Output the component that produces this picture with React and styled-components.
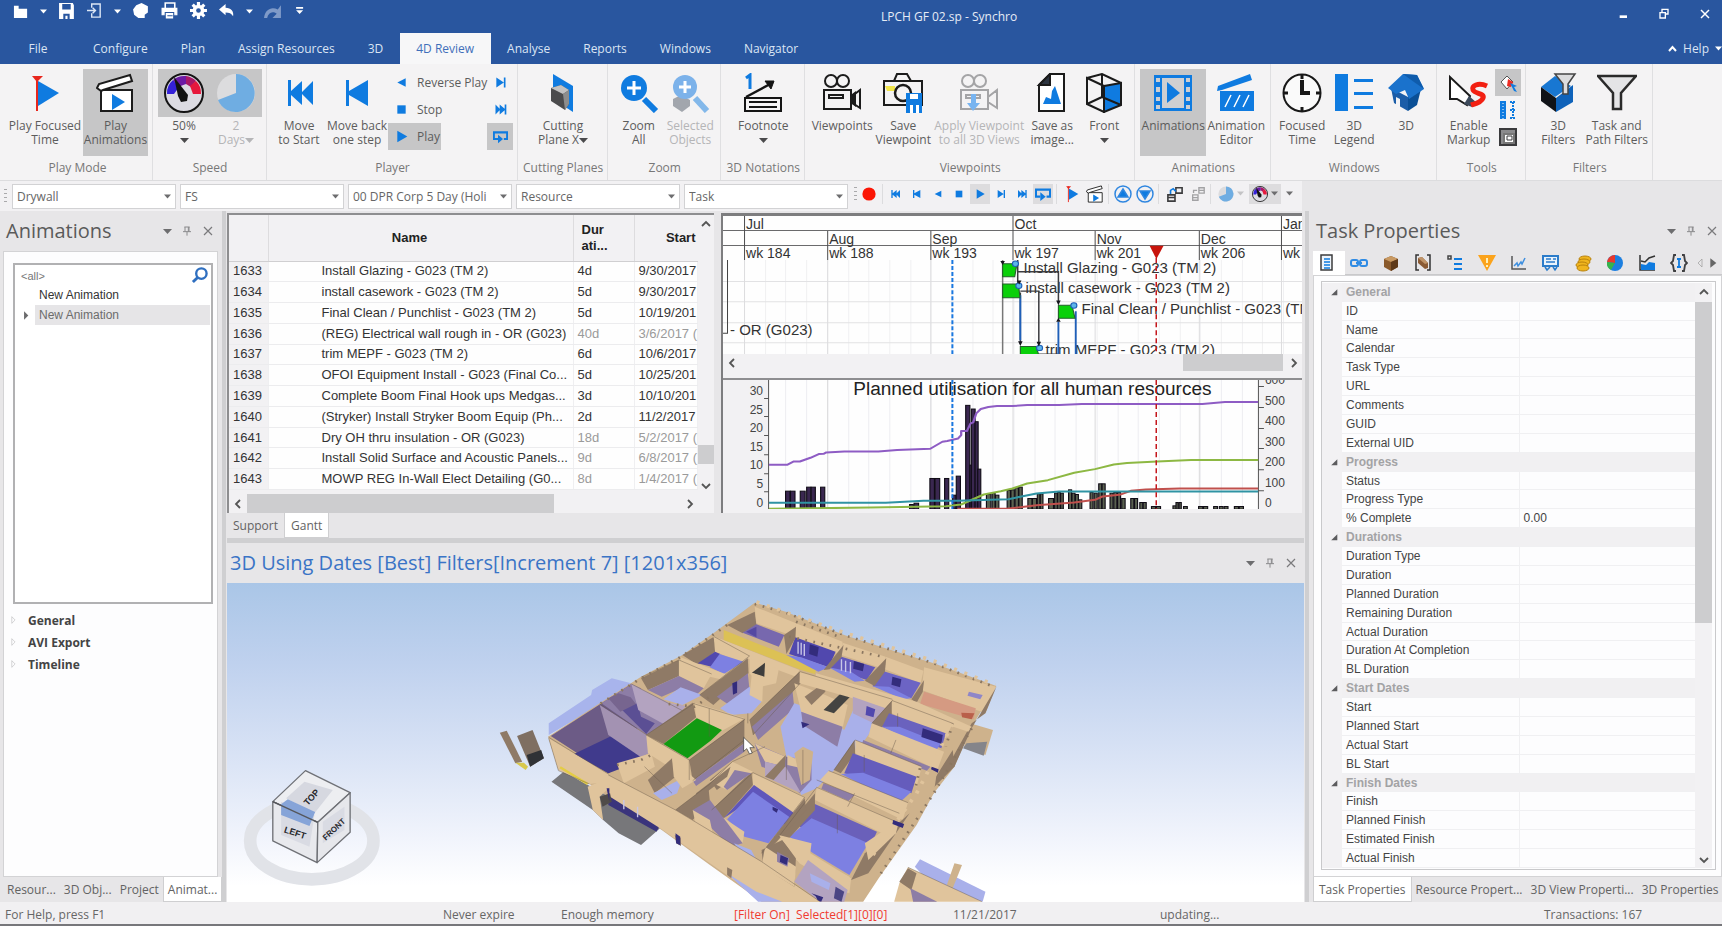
import React from 'react';
import styled, { createGlobalStyle, css } from 'styled-components';

const GlobalStyle = createGlobalStyle`
  * {
    box-sizing: border-box;
  }
  body {
    margin: 0;
    background: #e7e6e8;
    color: #4a4a4a;
    font-family: 'Open Sans', 'Noto Sans', sans-serif;
    font-size: 12px;
  }
  button,
  select,
  input {
    padding: 0;
    border: 0;
    background: transparent;
    color: inherit;
    font: inherit;
  }
  svg {
    display: block;
    flex: none;
  }
`;

const Window = styled.div`
  display: flex;
  flex-direction: column;
  min-height: 100vh;
`;

/* title bar */

const TitleBar = styled.header`
  display: grid;
  grid-template-columns: 5fr auto 4fr;
  align-items: center;
  height: 33px;
  background: #29569f;
  color: #e6ecf6;
`;

const QuickAccess = styled.div`
  display: flex;
  align-items: center;
  gap: 11px;
  height: 22px;
  align-self: start;
  padding-left: 13px;
`;

const WindowButtons = styled.div`
  display: flex;
  align-self: start;
  align-items: center;
  justify-content: flex-end;
  gap: 29px;
  height: 27px;
  padding-right: 11px;
`;

const PlainButton = styled.button`
  display: flex;
  align-items: center;
  justify-content: center;
`;

const TabBar = styled.nav`
  display: flex;
  align-items: stretch;
  height: 31px;
  background: #29569f;
  color: #dbe5f4;
`;

const RibbonTab = styled.button`
  padding: 0 17px 0 16px;
  white-space: nowrap;
  color: ${(props) => (props.$active ? '#3f6fba' : '#dbe5f4')};
  background: ${(props) => (props.$active ? '#f7f7f8' : 'transparent')};
`;

const FileTab = styled(RibbonTab)`
  width: 77px;
`;

const HelpButton = styled(RibbonTab)`
  display: flex;
  align-items: center;
  gap: 6px;
  margin-left: auto;
  padding: 0;
`;

/* ribbon */

const Ribbon = styled.section`
  display: flex;
  height: 117px;
  padding-left: 2px;
  background: #f4f3f4;
  border-bottom: 1px solid #dcdcde;
`;

const RibbonGroup = styled.div`
  display: flex;
  flex-direction: column;
  padding: 5px 4px 0 5px;
  border-right: 1px solid #dfdfe1;
`;

const GroupBody = styled.div`
  display: flex;
  height: 87px;
`;

const GroupLabel = styled.div`
  line-height: 24px;
  text-align: center;
  white-space: nowrap;
  color: #777;
`;

const LargeButton = styled.button`
  display: flex;
  flex-direction: column;
  align-items: center;
  width: ${(props) => props.$width}px;
  color: ${(props) => (props.$disabled ? '#b5b5b7' : '#5c5c5c')};
  background: ${(props) => (props.$active ? '#c6c6c7' : 'transparent')};
`;

const IconPane = styled.span`
  display: flex;
  align-items: center;
  justify-content: center;
  width: 100%;
  height: 48px;
  margin-bottom: 2px;
  background: ${(props) => (props.$shade ? '#c6c6c7' : 'transparent')};
`;

const ButtonLine = styled.span`
  display: flex;
  align-items: center;
  height: 14px;
  line-height: 14px;
  white-space: nowrap;
`;

const SmallColumn = styled.div`
  width: ${(props) => props.$width}px;
`;

const SmallButton = styled.button`
  display: flex;
  align-items: center;
  justify-content: ${(props) => (props.$iconOnly ? 'center' : 'flex-start')};
  gap: 8px;
  min-width: 26px;
  height: 27px;
  padding: 0 ${(props) => (props.$iconOnly ? 0 : 1)}px 0 ${(props) => (props.$iconOnly ? 0 : 6)}px;
  white-space: nowrap;
  color: #5c5c5c;
  background: ${(props) => (props.$active ? '#c6c6c7' : 'transparent')};
`;

/* filter toolbar */

const Toolbar = styled.div`
  display: flex;
  align-items: center;
  height: 30px;
`;

const ToolbarStrip = styled.div`
  display: flex;
  align-items: center;
  gap: 4px;
  height: 30px;
  padding: 0 4px;
  background: #f2f1f3;
`;

const PlayerStrip = styled(ToolbarStrip)`
  gap: 1px;
  padding: 0 6px 5px 2px;
`;

const Grip = styled.span`
  width: 3px;
  height: 14px;
  margin-right: 1px;
  background: repeating-linear-gradient(#a9a9ab 0 1px, transparent 1px 4px);
`;

const Combo = styled.label`
  position: relative;
  display: block;
  width: 164px;
  height: 25px;
  background: #fff;
  border: 1px solid #d2d2d4;
  svg {
    position: absolute;
    top: 9px;
    right: 4px;
    pointer-events: none;
  }
`;

const ComboSelect = styled.select`
  width: 144px;
  height: 23px;
  padding-left: 4px;
  appearance: none;
  outline: none;
  color: #666;
`;

const ToolButton = styled.button`
  display: flex;
  align-items: center;
  justify-content: center;
  gap: 3px;
  width: ${(props) => props.$width || 20}px;
  height: 20px;
  background: ${(props) => (props.$active ? '#dddcde' : 'transparent')};
`;

const ToolDivider = styled.span`
  width: 1px;
  height: 20px;
  margin: 0 2px;
  background: #dcdcde;
`;

/* docking layout */

const Main = styled.main`
  display: flex;
  flex: 1;
`;

const Splitter = styled.div`
  flex: none;
  width: 4px;
  margin: 0 1px;
  background: #cfcfd1;
`;

const SidePanel = styled.aside`
  display: flex;
  flex: none;
  flex-direction: column;
  width: ${(props) => props.$width}px;
  padding-left: 3px;
`;

const PanelHeader = styled.div`
  display: flex;
  align-items: center;
  height: 40px;
  padding: 0 ${(props) => props.$right}px 0 3px;
`;

const PanelTitle = styled.h2`
  flex: 1;
  margin: 0;
  font-size: 20px;
  font-weight: 400;
  line-height: 28px;
  white-space: nowrap;
  color: ${(props) => (props.$accent ? '#3a74c6' : '#5a5a5a')};
`;

const PanelControls = styled.div`
  display: flex;
  align-items: center;
  gap: 9px;
`;

const PanelBody = styled.div`
  flex: 1;
  margin-right: ${(props) => props.$gap || 0}px;
  background: #fdfdfe;
  border: 1px solid #d3d3d5;
  padding: ${(props) => props.$pad};
`;

const DockTabs = styled.div`
  display: flex;
  height: 25px;
`;

const DockTab = styled.button`
  flex: none;
  padding: 0 ${(props) => props.$pad || 4}px;
  white-space: nowrap;
  color: #636363;
  ${(props) =>
    props.$active &&
    css`
      background: #fff;
      border: 1px solid #cfcfd1;
      border-top: 0;
    `}
`;

/* animations panel */

const AnimationList = styled.div`
  height: 341px;
  padding: 1px;
  border: 2px solid #b1b1b3;
  background: #fff;
  font-family: 'Liberation Sans', sans-serif;
`;

const SearchRow = styled.label`
  display: flex;
  align-items: center;
  justify-content: space-between;
  height: 19px;
  padding: 0 2px 0 5px;
  font-size: 11px;
`;

const SearchInput = styled.input`
  width: 140px;
  outline: none;
  &::placeholder {
    color: #777;
    opacity: 1;
  }
`;

const AnimationRow = styled.div`
  display: flex;
  align-items: center;
  height: 20px;
  color: ${(props) => (props.$selected ? '#6c6c6c' : '#333')};
`;

const RowArrow = styled.span`
  width: 19px;
  padding-left: 5px;
`;

const RowName = styled.span`
  flex: 1;
  line-height: 20px;
  padding-left: 4px;
  background: ${(props) => (props.$selected ? '#e6e5e7' : 'transparent')};
`;

const Section = styled.button`
  display: flex;
  align-items: center;
  gap: 9px;
  height: 22px;
  font-weight: 700;
  color: #444;
`;

const Sections = styled.div`
  margin: 5px 0 0 -4px;
`;

/* centre area */

const Centre = styled.section`
  display: flex;
  flex: 1;
  flex-direction: column;
  min-width: 0;
`;

const ScheduleRow = styled.div`
  display: flex;
  gap: 7px;
  height: 300px;
  margin-top: 2px;
`;

const TaskPane = styled.div`
  display: grid;
  grid-template-columns: 1fr 16px;
  grid-template-rows: 1fr 19px;
  flex: 0 0 487px;
  background: #f2f1f3;
  border: solid #8e8e90;
  border-width: 2px 0 0 2px;
`;

const TableClip = styled.div`
  height: 279px;
  overflow: hidden;
`;

const TaskTable = styled.table`
  width: 100%;
  height: 275px;
  border-collapse: collapse;
  table-layout: fixed;
  font-family: 'Liberation Sans', sans-serif;
  font-size: 13px;
  color: #333;
  background: #fefefe;
  th {
    height: 46px;
    padding: 0 2px;
    line-height: 16px;
    color: #222;
    background: #f2f1f3;
    border-right: 1px solid #dddcde;
    border-bottom: 1px solid #d0cfd1;
  }
  td {
    padding: 0 0 0 4px;
    line-height: 16px;
    white-space: nowrap;
    border-bottom: 1px solid #ececee;
    border-right: 1px solid #efeff1;
  }
  td:first-child {
    background: #f2f1f3;
  }
  td:nth-child(2) {
    padding-left: 53px;
  }
`;

const FadedCell = styled.td`
  color: ${(props) => (props.$done ? '#9a9a9a' : '#333')};
`;

const NameHead = styled.th`
  && {
    padding-right: 24px;
  }
`;

const DurationHead = styled.th`
  text-align: left;
  && {
    padding-left: 8px;
  }
`;

const StartHead = styled.th`
  text-align: right;
  && {
    border-right: 0;
  }
`;

const ScrollTrack = styled.div`
  display: flex;
  flex-direction: ${(props) => (props.$vertical ? 'column' : 'row')};
  background: #f2f1f3;
`;

const ScrollSpace = styled.span`
  flex: ${(props) => props.$size} 0 0;
`;

const ScrollThumb = styled.span`
  flex: ${(props) => props.$size} 0 0;
  background: #cdcdcf;
`;

const ScrollButton = styled(PlainButton)`
  flex: 0 0 17px;
`;

const GanttPane = styled.div`
  display: flex;
  flex: 1;
  flex-direction: column;
  min-width: 0;
  margin-right: 2px;
  background: #f2f1f3;
  border: solid #7d7d7f;
  border-width: 3px 0 0 2px;
`;

const GanttScroll = styled.div`
  height: 17px;
  display: grid;
  margin-bottom: 7px;
`;

const ResourceFrame = styled.div`
  border-top: 2px solid #8e8e90;
`;

const HorizontalBar = styled.div`
  height: 5px;
  background: #cfcfd1;
`;

const Viewport = styled.div`
  flex: 1;
  height: 319px;
  overflow: hidden;
  background: linear-gradient(#aac6e7 0%, #bfd1ee 25%, #d5e0f4 50%, #f1f4fc 80%, #ffffff 95%);
`;

/* properties panel */

const PropertyTabs = styled.div`
  display: flex;
  align-items: center;
  height: 24px;
  border-bottom: 1px solid #c9c9cb;
`;

const PropertyTab = styled.button`
  display: flex;
  flex: none;
  align-items: center;
  justify-content: center;
  width: ${(props) => props.$width || 32}px;
  height: 24px;
  padding-right: 4px;
  background: ${(props) => (props.$active ? '#fff' : 'transparent')};
`;

const PropertyFrame = styled.div`
  display: grid;
  grid-template-columns: 1fr 17px;
  height: 589px;
  padding: 1px 3px 1px 0;
  border: 1px solid #c9c9cb;
`;

const PropertyTable = styled.table`
  width: 100%;
  height: 585px;
  border-collapse: collapse;
  table-layout: fixed;
  font-family: 'Liberation Sans', sans-serif;
  line-height: 14px;
  color: #444;
  td,
  th {
    padding: 0 0 0 4px;
    text-align: left;
    font-weight: 400;
    border-bottom: 1px solid #f0f0f2;
    white-space: nowrap;
  }
  td:last-child {
    border-left: 1px solid #f0f0f2;
  }
`;

const Gutter = styled.td`
  background: #f2f1f3;
  && {
    padding: 0 0 0 7px;
    border-bottom-color: #f2f1f3;
  }
`;

const SectionHead = styled.th`
  background: #f1f0f2;
  && {
    font-weight: 700;
    color: #a3a3a5;
  }
`;

/* status bar */

const StatusBar = styled.footer`
  display: grid;
  grid-template-columns: 438px 118px 173px 219px 207px 1fr 178px;
  align-items: center;
  height: 24px;
  padding: 4px 0 0 5px;
  background: #f1f0f2;
  border-bottom: 2px solid #77777b;
  white-space: nowrap;
`;

const StatusText = styled.span`
  line-height: 16px;
  color: ${(props) => (props.$alert ? '#f03b30' : '#666')};
`;

const BLUE = '#0f7be0';

/* ---- glyphs ---- */

const Caret = ({ color = '#6d6d6f', size = 9 }) => (
  <svg width={size} height="5" viewBox="0 0 9 5">
    <path d="M0 0h9L4.500 5z" fill={color} />
  </svg>
);

const Chevron = ({ turn = 0 }) => (
  <svg width="10" height="10" viewBox="0 0 10 10">
    <path d="M1 7l4-4 4 4" fill="none" stroke="#555" strokeWidth="1.800" transform={`rotate(${turn} 5 5)`} />
  </svg>
);

const shapes = {
  folder: <path d="M1 3h5v3h9v10H1z" fill="#fff" />,
  disk: <path fillRule="evenodd" fill="#fff" d="M1 1h13l1 2v13H1zM4 2v5h8V2zm1 9v5h2v-3h2v3h2v-5z" />,
  exportDoc: (
    <g fill="none" stroke="#dce6f5">
      <path d="M5 5V1h9v14H5v-4" strokeWidth="1.500" />
      <path d="M0 8h9M6 5l3 3-3 3" strokeWidth="1.500" />
    </g>
  ),
  blob: <path d="M4 3l5-2 6 3v6l-3 2v3H6l-4-3-1-5z" fill="#fff" />,
  printer: (
    <g fill="none" stroke="#fff">
      <path d="M4 6V1h9v5" strokeWidth="1.500" />
      <path d="M1 6h14v6H1z" fill="#fff" />
      <path d="M4 10h8v6H4zM6 13h5" stroke="#29569f" fill="#fff" />
    </g>
  ),
  gear: (
    <g>
      <path d="M8 0v16M0 8h16M2.500 2.500l11 11M13.500 2.500l-11 11" stroke="#fff" strokeWidth="3" />
      <circle cx="8" cy="8" r="5.500" fill="#fff" />
      <circle cx="8" cy="8" r="2.200" fill="#29569f" />
    </g>
  ),
  undo: <path d="M0 7l7-6v4c6 0 9 4 8 9-2-3-4-4-8-4v3z" fill="#fff" />,
  redo: <path d="M16 3v12H8l4-4C8 8 4 10 3 15H0C1 7 7 4 13 7z" fill="#7f9ac8" />,
  more: <path d="M4 4h9v2H4zM4 8h9l-4.500 5z" fill="#fff" />,
  flag: (
    <g>
      <path d="M13 8l21 12-21 13z" fill={BLUE} />
      <path d="M12 3v35" stroke="#e8261c" strokeWidth="2" />
      <path d="M7 3h11l-6 6z" fill="#e8261c" />
    </g>
  ),
  clapper: (
    <g fill="#fff" stroke="#1c1c1c" strokeWidth="2">
      <path d="M5 17h31v21H5z" />
      <path d="M5 18L1 15l2-4L34 2l2 6L7 17z" />
      <path d="M16 21l13 8-13 8z" fill={BLUE} stroke="none" />
    </g>
  ),
  gauge: (
    <g>
      <circle cx="20" cy="20" r="19" fill="#dcdbe2" stroke="#141414" strokeWidth="2" />
      <path d="M3 21A17 17 0 0 1 9 7l6 7-5 7z" fill="#3420d8" />
      <path d="M9 7a17 17 0 0 1 13-4v8l-8 3z" fill="#6c1aa4" />
      <path d="M22 3a17 17 0 0 1 10 5l-5 6-5-3z" fill="#a81868" />
      <path d="M32 8a17 17 0 0 1 5 13h-8l-3-8z" fill="#e6183c" />
      <path d="M10 4l14 18-1 6-6 1-3-6z" fill="#111" />
    </g>
  ),
  pie: (
    <g>
      <circle cx="20" cy="20" r="19" fill="#dcdcde" />
      <path d="M20 20V1a19 19 0 1 1-18 26z" fill="#6fade2" />
    </g>
  ),
  toStart: <path d="M9 7h3v11L23 8v11l11-11v24L23 21v11L12 22v11H9z" fill={BLUE} />,
  stepBack: <path d="M9 7h3v11l19-11v26L12 22v11H9z" fill={BLUE} />,
  cutPlane: (
    <g>
      <path d="M10 1l20 12v26L10 26z" fill={BLUE} />
      <path d="M8 15l10-3 8 5v14l-4 6-14-9z" fill="#4b4b4d" />
      <path d="M8 15l10-3 8 5-6 4z" fill="#c2c2c2" />
      <path d="M20 21l6-4v14l-4 6z" fill="#8d8d8d" />
    </g>
  ),
  zoomAll: (
    <g>
      <circle cx="15" cy="15" r="13" fill={BLUE} />
      <path d="M15 8v14M8 15h14" stroke="#fff" strokeWidth="3" />
      <path d="M25 26l12 12" stroke={BLUE} strokeWidth="6" />
    </g>
  ),
  zoomSelected: (
    <g>
      <path d="M3 26l8-4 9 5v6l-8 6-9-6z" fill="#a2a6ad" />
      <circle cx="15" cy="14" r="12" fill="#7cb2ea" />
      <path d="M15 8v12M9 14h12" stroke="#fff" strokeWidth="3" />
      <path d="M25 25l12 13" stroke="#83b8ea" strokeWidth="6" />
    </g>
  ),
  footnote: (
    <g fill="none" stroke="#141414" strokeWidth="2.500">
      <path d="M3 5l4-3v14" stroke={BLUE} strokeWidth="3" />
      <path d="M2 25h36v13H2zM6 29h28M6 34h28" strokeWidth="2" />
      <path d="M3 24L29 10" />
      <path d="M22 8l9 0-3 8z" fill="#141414" strokeWidth="1" />
    </g>
  ),
  camcorder: (
    <g fill="none" stroke="#1b1b1b" strokeWidth="2">
      <circle cx="9" cy="8" r="6" />
      <circle cx="21" cy="8" r="6" />
      <path d="M2 17h27v19H2zM7 22h14v3H7z" />
      <path d="M29 24l9-7v18l-9-6z" />
      <path d="M29 23l4-3v12l-4-3z" fill="#1b1b1b" />
    </g>
  ),
  saveView: (
    <g fill="none" stroke="#1b1b1b" strokeWidth="2">
      <path d="M1 8h38v24H1zM11 8l3-7h10l4 7" />
      <path d="M2 13h10v5H4z" fill="#f2e64c" stroke="none" />
      <circle cx="20" cy="20" r="8" strokeWidth="2.500" />
      <path d="M23 20h16v20H23z" fill={BLUE} stroke="none" />
      <path d="M27 21h8v5h-8zM27 32h3v8h-3zM33 32h3v8h-3z" fill="#fff" stroke="none" />
    </g>
  ),
  applyView: (
    <g fill="none" stroke="#a4a4a6" strokeWidth="2">
      <circle cx="9" cy="8" r="6" />
      <circle cx="21" cy="8" r="6" />
      <path d="M2 17h27v19H2zM7 22h14v3H7zM29 24l9-7v18l-9-6z" />
      <path d="M12 21h5v9h4l-7 8-6-8h4z" fill="#78b4f0" stroke="none" />
    </g>
  ),
  saveImage: (
    <g fill="none" stroke="#1b1b1b" strokeWidth="2">
      <path d="M18 1h14v37H7V12z" fill="#fff" />
      <path d="M18 1v11H7z" fill="#2c3440" />
      <path d="M11 31l3-7 5 2 1-8 3-5 3 9 3 9z" fill={BLUE} stroke="none" />
    </g>
  ),
  cube: (
    <g fill="none" stroke="#1b1b1b" strokeWidth="2">
      <path d="M20 13l17-3v22l-17 7z" fill={BLUE} />
      <path d="M3 5l17 8v26L3 31zM3 5l15-4 19 9M18 1v23L3 31M18 24l19 8" />
    </g>
  ),
  film: (
    <g>
      <path d="M1 2h38v36H1z" fill={BLUE} />
      <path d="M9 5h22v30H9z" fill="#cfcfd1" />
      <path d="M14 9l13 11-13 10z" fill={BLUE} />
      <path d="M3 5h4v4H3zm0 9h4v5H3zm0 10h4v4H3zm0 8h4v4H3zM33 5h4v4h-4zm0 9h4v5h-4zm0 10h4v4h-4zm0 8h4v4h-4z" fill="#cfcfd1" />
    </g>
  ),
  editor: (
    <g>
      <path d="M4 18h34v20H4zM2 13L34 1l2 6L6 17 1 18z" fill={BLUE} />
      <path d="M9 34l6-12M18 34l6-12M27 34l6-12" stroke="#fff" strokeWidth="1.500" />
    </g>
  ),
  clock: (
    <g fill="none" stroke="#181818" strokeWidth="2">
      <circle cx="20" cy="20" r="18.500" fill="#fafafa" />
      <path d="M20 7v13h8" strokeWidth="4" />
      <path d="M20 2v4M20 34v4M2 20h4M34 20h4" strokeWidth="3" />
    </g>
  ),
  legend: <path d="M1 1h13v37H1zM20 6h19v3H20zM20 19h19v3H20zM20 33h19v3H20z" fill={BLUE} />,
  house: (
    <g>
      <path d="M5 15l3 15 14 8V24z" fill="#1b5da8" />
      <path d="M22 22l13-6-4 16-9 6z" fill="#0a4f96" />
      <path d="M2 15L17 1l14 1 7 14-15 10-4-9-9 4z" fill="#1a72cc" />
      <path d="M17 1l14 1 7 14-10-7z" fill="#0f5cac" />
      <path d="M10 24l4 2v9l-4-2z" fill="#f4f3f4" />
    </g>
  ),
  markup: (
    <g>
      <path d="M1 4v22h7l10 6 3-9z" fill="#fff" stroke="#1b1b1b" strokeWidth="2" />
      <path d="M15 31l5-8 8 7-5 4z" fill="#3d4a5c" />
      <path d="M38 13c-9-4-16 0-14 4s12 3 10 8-9 6-12 7" fill="none" stroke="#f22012" strokeWidth="5" />
    </g>
  ),
  paint: (
    <g>
      <path d="M2 8l6-6 6 6-6 7z" fill="#fff" stroke="#555" />
      <path d="M9 5l5 3-2 5-4-1z" fill="#ee2b22" />
      <path d="M11 9l7 3-3 1 3 5-3-1-2-4z" fill={BLUE} />
    </g>
  ),
  rulers: (
    <g fill="none" stroke={BLUE} strokeWidth="2">
      <path d="M2 0h4v18H2z" fill={BLUE} />
      <path d="M4 2v16" stroke="#fff" strokeWidth="1" strokeDasharray="1 2" />
      <path d="M14 1v16M11 1h6M11 9h6M11 17h6" strokeDasharray="2 1" />
    </g>
  ),
  panelBox: (
    <g fill="none" stroke="#3a3a3c" strokeWidth="2">
      <path d="M1 1h16v16H1z" fill="#8b8b8d" />
      <path d="M5 6h10v9H5z" fill="#fff" stroke="#777" />
      <path d="M8 8h5v4H8z" strokeWidth="1" />
    </g>
  ),
  filter3d: (
    <g>
      <path d="M3 14l14-11 16 10-16 11z" fill="#1877d2" />
      <path d="M3 14l15 11v14L3 28z" fill="#101318" />
      <path d="M18 25l17-13v17L18 39z" fill="#0e62ba" />
      <path d="M17 1h20l-7 10v10h-5V11z" fill="#dcdcde" stroke="#444" strokeWidth="1.500" />
    </g>
  ),
  funnel: <path d="M1 3h38L24 20v16h-8V20z" fill="#e4e4e6" stroke="#2a2a2a" strokeWidth="2.500" />,
  prev: <path d="M14 4v10L4 9z" fill={BLUE} />,
  stop: <path d="M4 4h10v10H4z" fill={BLUE} />,
  play: <path d="M4 2v14l12-7z" fill={BLUE} />,
  next: <path d="M4 3l9 6-9 6zM13 3h2v12h-2z" fill={BLUE} />,
  end: <path d="M3 3l5 5V3l6 5V3h2v12h-2v-5l-6 5v-5l-5 5z" fill={BLUE} />,
  start: <path d="M15 3l-5 5V3L4 8V3H2v12h2v-5l6 5v-5l5 5z" fill={BLUE} />,
  back: <path d="M14 3L5 8V3H3v12h2v-5l9 5z" fill={BLUE} />,
  loop: (
    <g>
      <path d="M6 12H1V4h16v8h-4" fill="none" stroke={BLUE} strokeWidth="2.500" />
      <path d="M6 7v10l6-5z" fill={BLUE} />
    </g>
  ),
  record: <circle cx="9" cy="9" r="8.500" fill="#fb1605" />,
  circleUp: (
    <g fill="none" stroke="#2f86e0" strokeWidth="1.500">
      <circle cx="9" cy="9" r="8" />
      <path d="M9 4l5 8H4z" fill={BLUE} />
    </g>
  ),
  circleDown: (
    <g fill="none" stroke="#2f86e0" strokeWidth="1.500">
      <circle cx="9" cy="9" r="8" />
      <path d="M9 14l5-8H4z" fill={BLUE} />
    </g>
  ),
  boxes: (
    <g fill="none" stroke="#3c3c3e" strokeWidth="1.800">
      <path d="M1 10h8v7H1zM10 2h7v6h-7zM1 13h8" />
      <path d="M4 9V5l3-2 3 3" stroke={BLUE} />
    </g>
  ),
  boxesGrey: (
    <g fill="none" stroke="#a2a2a4" strokeWidth="1.500">
      <path d="M3 10h6v6H3zM10 2h6v6h-6zM4 8V5h4M3 13h6M10 5h6" />
    </g>
  ),
  sheet: (
    <g fill="none" stroke="#3c3c3e" strokeWidth="1.500">
      <path d="M3 1h11v15H3z" fill="#eef4fb" />
      <path d="M6 5h6M6 8h6M6 11h6M6 14h6" stroke={BLUE} />
    </g>
  ),
  chain: (
    <g fill="none" stroke="#2f8be4" strokeWidth="2">
      <rect x="1" y="6" width="7" height="6" rx="2" />
      <rect x="10" y="6" width="7" height="6" rx="2" />
      <path d="M6 9h6" />
    </g>
  ),
  block: (
    <g>
      <path d="M2 5l7-3 7 3v8l-7 4-7-4z" fill="#8a5a2c" />
      <path d="M2 5l7-3 7 3-7 3z" fill="#c99a63" />
      <path d="M9 8l7-3v8l-7 4z" fill="#5f3a1a" />
    </g>
  ),
  bracketBlock: (
    <g>
      <path d="M5 1H2v15h3M13 1h3v15h-3" fill="none" stroke="#333" strokeWidth="1.500" />
      <path d="M4 4l4-1 6 6v5l-3 1-7-6z" fill="#8a5a34" />
      <path d="M4 4l4-1 6 6-3 1z" fill="#c09468" />
    </g>
  ),
  tree: (
    <g fill="none" stroke={BLUE} strokeWidth="2">
      <path d="M8 5h8M8 10h8M8 15h8" />
      <path d="M2 2h3v3H2z" stroke="#444" strokeWidth="1.500" />
    </g>
  ),
  warning: (
    <g>
      <path d="M0 1h18L9 17z" fill="#fba31c" />
      <path d="M9 4v5M9 11v2" stroke="#fff0b8" strokeWidth="2" />
    </g>
  ),
  trend: (
    <g fill="none" stroke="#555" strokeWidth="1.500">
      <path d="M2 2v13h14" />
      <path d="M4 12l3-3 1 3 3-4 1 2 3-6" stroke="#3e8fdf" />
    </g>
  ),
  certificate: (
    <g fill="none" stroke="#2b7cca" strokeWidth="2">
      <path d="M1 2h15v10H1z" fill="#e9f3fc" />
      <path d="M4 5h5M4 8h9M11 5h3M3 13l2 3 3-3M11 13l2 3 2-3" strokeWidth="1.500" />
    </g>
  ),
  coins: (
    <g fill="#f0b51e" stroke="#b9820c">
      <ellipse cx="11" cy="5" rx="6" ry="3" />
      <ellipse cx="10" cy="8" rx="6" ry="3" />
      <ellipse cx="8" cy="11" rx="6" ry="3" />
      <ellipse cx="9" cy="14" rx="6" ry="3" />
    </g>
  ),
  pieColor: (
    <g>
      <circle cx="9" cy="9" r="8" fill="#1c7fe0" />
      <path d="M9 9V1a8 8 0 0 0-8 7z" fill="#e8382c" />
      <path d="M9 9L1 8a8 8 0 0 0 4 8z" fill="#35b44a" />
    </g>
  ),
  area: (
    <g>
      <path d="M2 1v15h15" fill="none" stroke="#333" strokeWidth="1.500" />
      <path d="M3 10l5 1 3-3 6 1v7H3z" fill={BLUE} />
      <path d="M3 7l4 1 4-4 6-2" fill="none" stroke="#333" strokeWidth="1.500" />
    </g>
  ),
  braces: (
    <g fill="none" stroke="#3f3f41" strokeWidth="1.800">
      <path d="M6 1H4L3 7 1 9l2 2 1 6h2M12 1h2l1 6 2 2-2 2-1 6h-2" />
      <path d="M7 5h4M9 5v8M7 13h4" stroke={BLUE} />
    </g>
  ),
  pin: <path d="M5 3h8M6 3v7M11 3v7M12 3v7M3 10h12M9 10v6" fill="none" stroke="#8a8a8c" strokeWidth="1.500" />,
  close: <path d="M3 3l12 12M15 3L3 15" stroke="#7a7a7c" strokeWidth="1.800" />,
  search: (
    <g fill="none" stroke="#2f6fc0" strokeWidth="2.500">
      <circle cx="11" cy="7" r="5.500" />
      <path d="M7 11l-5 5" strokeWidth="3" />
    </g>
  ),
  closed: <path d="M5 3l6 6-6 6z" fill="none" stroke="#b5b5b7" />,
  closedSolid: <path d="M5 2l7 7-7 7z" fill="#6b6b6d" />,
  opened: <path d="M15 4v11H4z" fill="#5c5c5e" />,
  leftHollow: <path d="M12 3v12L6 9z" fill="none" stroke="#999" />,
  rightSolid: <path d="M5 2v14l9-7z" fill="#666" />,
  minimise: <path d="M4 11h11v4H4z" fill="#fff" />,
  restore: <path d="M6 6V2h9v7h-4M3 7h8v8H3z" fill="none" stroke="#fff" strokeWidth="2" />,
  closeWhite: <path d="M3 3l12 12M15 3L3 15" stroke="#fff" strokeWidth="2.200" />,
};

const Icon = ({ name, size = 18, box = 18 }) => (
  <svg width={size} height={size} viewBox={`0 0 ${box} ${box}`} aria-hidden="true">
    {shapes[name]}
  </svg>
);

/* ---- data ---- */

const ribbonTabs = ['Configure', 'Plan', 'Assign Resources', '3D', '4D Review', 'Analyse', 'Reports', 'Windows', 'Navigator'];

const ribbonGroups = [
  {
    label: 'Play Mode',
    buttons: [
      { icon: 'flag', lines: ['Play Focused', 'Time'], width: 76 },
      { icon: 'clapper', lines: ['Play', 'Animations'], width: 65, active: true },
    ],
  },
  {
    label: 'Speed',
    buttons: [
      { icon: 'gauge', lines: ['50%'], width: 52, shade: true, caret: 'below' },
      { icon: 'pie', lines: ['2', 'Days'], width: 52, shade: true, disabled: true, caret: 'inline' },
    ],
  },
  {
    label: 'Player',
    buttons: [
      { icon: 'toStart', lines: ['Move', 'to Start'], width: 54 },
      { icon: 'stepBack', lines: ['Move back', 'one step'], width: 62 },
    ],
    columns: [
      {
        width: 99,
        items: [
          { icon: 'prev', text: 'Reverse Play' },
          { icon: 'stop', text: 'Stop' },
          { icon: 'play', text: 'Play', active: true },
        ],
      },
      { width: 26, items: [{ icon: 'next' }, { icon: 'end' }, { icon: 'loop', active: true }] },
    ],
  },
  { label: 'Cutting Planes', buttons: [{ icon: 'cutPlane', lines: ['Cutting', 'Plane X'], width: 80, caret: 'inline' }] },
  {
    label: 'Zoom',
    buttons: [
      { icon: 'zoomAll', lines: ['Zoom', 'All'], width: 51 },
      { icon: 'zoomSelected', lines: ['Selected', 'Objects'], width: 52, disabled: true },
    ],
  },
  { label: '3D Notations', buttons: [{ icon: 'footnote', lines: ['Footnote'], width: 74, caret: 'below' }] },
  {
    label: 'Viewpoints',
    buttons: [
      { icon: 'camcorder', lines: ['Viewpoints'], width: 64 },
      { icon: 'saveView', lines: ['Save', 'Viewpoint'], width: 58 },
      { icon: 'applyView', lines: ['Apply Viewpoint', 'to all 3D Views'], width: 94, disabled: true },
      { icon: 'saveImage', lines: ['Save as', 'image...'], width: 52 },
      { icon: 'cube', lines: ['Front'], width: 52, caret: 'below' },
    ],
  },
  {
    label: 'Animations',
    buttons: [
      { icon: 'film', lines: ['Animations'], width: 66, active: true },
      { icon: 'editor', lines: ['Animation', 'Editor'], width: 60 },
    ],
  },
  {
    label: 'Windows',
    buttons: [
      { icon: 'clock', lines: ['Focused', 'Time'], width: 52 },
      { icon: 'legend', lines: ['3D', 'Legend'], width: 52 },
      { icon: 'house', lines: ['3D'], width: 52 },
    ],
  },
  {
    label: 'Tools',
    buttons: [{ icon: 'markup', lines: ['Enable', 'Markup'], width: 53 }],
    columns: [{ width: 26, items: [{ icon: 'paint', active: true }, { icon: 'rulers' }, { icon: 'panelBox' }] }],
  },
  {
    label: 'Filters',
    buttons: [
      { icon: 'filter3d', lines: ['3D', 'Filters'], width: 54 },
      { icon: 'funnel', lines: ['Task and', 'Path Filters'], width: 63 },
    ],
  },
];

const combos = ['Drywall', 'FS', '00 DPR Corp 5 Day (Holi', 'Resource', 'Task'];

const tasks = [
  [1633, 'Install Glazing - G023 (TM 2)', '4d', '9/30/2017'],
  [1634, 'install casework - G023 (TM 2)', '5d', '9/30/2017'],
  [1635, 'Final Clean / Punchlist - G023 (TM 2)', '5d', '10/19/201'],
  [1636, '(REG) Electrical wall rough in - OR (G023)', '40d', '3/6/2017 (', true],
  [1637, 'trim MEPF - G023 (TM 2)', '6d', '10/6/2017'],
  [1638, 'OFOI Equipment Install - G023 (Final Co...', '5d', '10/25/201'],
  [1639, 'Complete Boom Final Hook ups Medgas...', '3d', '10/10/201'],
  [1640, '(Stryker) Install Stryker Boom Equip (Ph...', '2d', '11/2/2017'],
  [1641, 'Dry OH thru insulation - OR (G023)', '18d', '5/2/2017 (', true],
  [1642, 'Install Solid Surface and Acoustic Panels...', '9d', '6/8/2017 (', true],
  [1643, 'MOWP REG In-Wall Elect Detailing (G0...', '8d', '1/4/2017 (', true],
];

const properties = [
  ['General', 'ID', 'Name', 'Calendar', 'Task Type', 'URL', 'Comments', 'GUID', 'External UID'],
  ['Progress', 'Status', 'Progress Type', '% Complete'],
  ['Durations', 'Duration Type', 'Duration', 'Planned Duration', 'Remaining Duration', 'Actual Duration', 'Duration At Completion', 'BL Duration'],
  ['Start Dates', 'Start', 'Planned Start', 'Actual Start', 'BL Start'],
  ['Finish Dates', 'Finish', 'Planned Finish', 'Estimated Finish', 'Actual Finish'],
];

const propertyIcons = ['sheet', 'chain', 'block', 'bracketBlock', 'tree', 'warning', 'trend', 'certificate', 'coins', 'pieColor', 'area', 'braces'];

/* ---- gantt ---- */

const chartFont = "'Liberation Sans', sans-serif";

const months = [
  { x: 64, name: 'Jul', week: 'wk 184', top: true },
  { x: 284, name: 'Aug', week: 'wk 188' },
  { x: 558, name: 'Sep', week: 'wk 193' },
  { x: 776, name: 'Oct', week: 'wk 197', top: true },
  { x: 995, name: 'Nov', week: 'wk 201' },
  { x: 1270, name: 'Dec', week: 'wk 206' },
  { x: 1489, name: 'Jan', week: 'wk', top: true },
];

const cx = (x) => Math.round(x * 0.3762 - 3);

const weeks = Array.from({ length: 27 }, (_, i) => 64 + i * 55);

const GanttChart = () => (
  <svg width="100%" height="138" viewBox="0 0 578 138" preserveAspectRatio="xMinYMin slice" fontFamily={chartFont} fontSize="14" fill="#333">
    <rect width="1200" height="138" fill="#fefefe" />
    {weeks.map((x) => (
      <path key={x} d={`M${cx(x)}.5 44V138`} stroke="#f0f0f2" />
    ))}
    <path d="M0 65.500H1200M0 85.500H1200M0 106.500H1200M0 126.500H1200" stroke="#e2e2e4" />
    <path d="M0 14.500H1200M0 29.500H1200" stroke="#6a6a6c" />
    {months.map((m) => (
      <g key={m.name}>
        <path d={`M${cx(m.x)}.5 44V138`} stroke="#dcdcde" />
        <path d={`M${cx(m.x)}.5 ${m.top ? 0 : 15}V44`} stroke="#4c4c4e" />
        <text x={cx(m.x) + 2} y={m.top ? 13 : 28}>{m.name}</text>
        <text x={cx(m.x) + 2} y="42">{m.week}</text>
      </g>
    ))}
    <path d="M4.500 44V117H0" fill="none" stroke="#444" />
    <g fontSize="15">
      <text x="7" y="119">- OR (G023)</text>
      <text x="300" y="57">Install Glazing - G023 (TM 2)</text>
      <text x="302" y="77">install casework - G023 (TM 2)</text>
      <text x="358" y="98">Final Clean / Punchlist - G023 (TM 2)</text>
      <text x="322" y="139">trim MEPF - G023 (TM 2)</text>
    </g>
    <g transform="translate(-3 -11) scale(.3762 .3333)">
      <g fill="none" stroke="#3c3c40" strokeWidth="4">
        <path d="M750 165V447" stroke="#777" />
        <path d="M790 165V240M790 200H898V290M797 258H846V415M797 262V415M846 447H898" />
        <path d="M797 270V405M898 350V447M944 318V447" stroke="#1f5fb8" strokeWidth="5" />
      </g>
      <g fill="#0ad00a" stroke="#26602c" strokeWidth="3">
        <path d="M750 176h38l-6 39h-32zM750 237h42l4 41h-46zM898 300h36l8 39h-44zM797 424h42l8 30h-50z" />
      </g>
      <g fill="#5db4ea" stroke="#1f5fb8" strokeWidth="3">
        <circle cx="784" cy="176" r="8" />
        <circle cx="793" cy="242" r="8" />
        <circle cx="939" cy="301" r="8" />
        <circle cx="848" cy="428" r="8" />
      </g>
      <path d="M788 226h12l-6 12zM791 408h12l-6 14zM840 410h12l-6 14zM892 286h12l-6 14zM892 350h12l-6-12zM744 168h12l-6 12z" fill="#15151c" />
      <path d="M1140 122h37l-19 40z" fill="#c8140c" />
    </g>
    <path d="M229 44V138" stroke="#1a78e0" strokeWidth="2" strokeDasharray="4 2" />
    <path d="M432.500 42V138" stroke="#c4161c" strokeWidth="1.500" strokeDasharray="5 3" />
  </svg>
);

/* x, width and top of every bar; all of them stand on 912 */
const bars = [
  [174, 12, 858], [187, 12, 858], [213, 13, 858], [230, 11, 846], [242, 11, 846], [267, 11, 846],
  [503, 10, 898], [515, 12, 894], [557, 12, 820], [571, 12, 820], [596, 11, 820], [617, 9, 870], [627, 11, 813],
  [652, 11, 601], [663, 6, 780], [667, 10, 612], [677, 8, 650], [684, 8, 792],
  [707, 12, 868], [722, 8, 864], [731, 9, 870], [762, 9, 856], [772, 9, 854], [783, 9, 848], [793, 9, 846],
  [817, 11, 880], [829, 11, 880], [842, 7, 866], [850, 7, 866], [872, 13, 880], [888, 7, 864], [896, 7, 862], [904, 7, 864],
  [925, 8, 854], [934, 8, 864], [943, 8, 868], [952, 8, 884], [982, 8, 862], [993, 8, 864], [1005, 8, 836], [1014, 8, 836],
  [1035, 8, 864], [1045, 8, 862], [1055, 8, 862], [1066, 9, 880], [1090, 8, 880], [1100, 8, 880], [1114, 8, 892], [1123, 8, 892],
  [1145, 11, 904], [1158, 11, 904], [1202, 10, 902], [1210, 6, 892], [1218, 6, 892], [1230, 10, 904],
  [1270, 11, 904], [1283, 11, 904], [1310, 10, 904], [1325, 10, 904], [1338, 10, 904], [1365, 11, 904], [1378, 11, 904],
];

const ResourceChart = () => (
  <svg width="100%" height="129" viewBox="0 0 578 129" preserveAspectRatio="xMinYMin slice" fontFamily={chartFont} fontSize="12" fill="#444">
    <rect x="46" width="489" height="129" fill="#fefefe" />
    {weeks.filter((x) => x > 140 && x < 1420).map((x) => (
      <path key={x} d={`M${cx(x)}.5 0V129`} stroke="#ededf1" />
    ))}
    {months.slice(1, 6).map((m) => (
      <path key={m.name} d={`M${cx(m.x)}.5 0V129`} stroke="#d9d9db" />
    ))}
    {[30, 25, 20, 15, 10, 5, 0].map((n, i) => (
      <text key={n} x="40" y={15 + Math.round(i * 18.6)} textAnchor="end">{n}</text>
    ))}
    {[600, 500, 400, 300, 200, 100, 0].map((n, i) => (
      <text key={n} x="541" y={4 + Math.round(i * 20.5)}>{n}</text>
    ))}
    <path d="M45.500 0V129M41 18.500h5M41 36.500h5M41 55.500h5M41 74.500h5M41 93.500h5M41 111.500h5" stroke="#555" />
    <path d="M534.500 0V129M535 6.500h5M535 27.500h5M535 48.500h5M535 68.500h5M535 89.500h5M535 110.500h5" stroke="#555" />
    <text x="130" y="15" fontSize="19" fill="#222">Planned utilisation for all human resources</text>
    <g transform="translate(-3 -175) scale(.3762 .3333)">
      {bars.map(([x, w, top]) => (
        <rect key={x} x={x} y={top} width={w} height={912 - top} fill={x > 700 ? '#5a6150' : '#3a2750'} stroke="#100c16" strokeWidth="3" />
      ))}
      <g fill="none" strokeWidth="6" strokeLinejoin="round">
        <path stroke="#8e5cc4" d="M130 779H178L196 769H212L240 758L262 747L275 746L282 742L330 739H420L470 735L558 731L590 710L603 708L617 704L632 700L640 690V678H655L665 655L672 652L680 625L692 612L712 606L735 603H776L815 600H900L960 597H1280L1340 591H1428" />
        <path stroke="#8db843" d="M130 911L400 907L600 903L640 898L700 868L745 858L776 850L815 835L870 825L940 803L995 792L1045 778L1080 774L1160 769L1250 765H1428" />
        <path stroke="#c0504d" d="M630 911H760L840 900L940 892L995 884L1015 874L1060 869L1090 857L1130 853L1220 850H1428" />
        <path stroke="#2f93a3" d="M130 893H440L540 887H630L765 882L800 874L840 865L900 859H1428" />
      </g>
    </g>
    <path d="M229 0V129" stroke="#1a78e0" strokeWidth="2" strokeDasharray="4 2" />
    <path d="M432.500 0V129" stroke="#c4161c" strokeWidth="1.500" strokeDasharray="5 3" />
  </svg>
);

/* ---- 3D model ---- */

const TAN = '#e0c49c';
const TAN_DIM = '#ceb28c';
const SHADE = '#8f7a66';
const PURPLE = '#8d7da6';
const LILAC = '#b3a3c0';
const FLOOR = '#7d80e2';
const PALE = '#a9b0ea';
const DEEP = '#5148ae';

const faces = [
  ['#77777a', '180,605 215,575 330,640 495,745 440,795 375,760 330,720 300,690'],
  ['#a8b4ec', '172,430 295,345 298,330 355,295 420,312 360,350 172,465'],
  [SHADE, '30,458 50,452 95,545 75,550'],
  ['#7f6f62', '80,468 125,450 158,535 118,560'],
  ['#303236', '108,525 150,510 158,535 118,560'],
  ['#d8c84c', '75,548 105,570 112,560 100,548'],
  [TAN_DIM, '1395,430 1462,450 1440,525 1378,500'],
  ['#85858a', '1385,490 1445,485 1435,527 1375,505'],
  // outer shell
  [TAN_DIM, '770,68 860,95 1030,165 1150,205 1290,250 1472,318 1400,440 1350,560 1290,640 1240,735 1130,895 1085,965 790,965 640,855 500,750 345,650 290,612 200,570 170,470 320,370 440,290 560,225 650,160'],
  [PALE, '690,880 760,915 790,965 760,945'],
  // large room at the left
  ['#6c5b86', '178,468 412,312 420,380 440,520 345,580'],
  ['#403a8c', '245,522 360,465 445,520 435,545 345,580'],
  ['#a392b2', '320,375 457,465 462,520 440,532 345,465'],
  [PURPLE, '325,370 412,312 440,325 450,400 530,380 560,392 457,465'],
  ['#5b4f94', '380,385 430,370 440,410 480,430 455,462'],
  [LILAC, '412,312 520,368 570,378 520,440 432,390'],
  ['#77658f', '345,355 375,340 410,352 425,372 380,395'],
  [TAN, '172,475 345,582 350,605 290,612 200,570'],
  // upper left rooms
  [SHADE, '440,295 550,240 550,288 460,330'],
  [TAN, '550,240 645,282 622,325 550,288'],
  [PURPLE, '550,288 622,325 600,345 545,330 500,350 460,330'],
  [PALE, '505,358 555,322 618,345 560,375'],
  [SHADE, '560,225 652,170 655,215 605,255'],
  [TAN, '652,170 755,225 735,250 655,215'],
  [DEEP, '605,250 655,215 670,222 650,262'],
  [FLOOR, '640,262 668,222 738,245 680,282'],
  [TAN, '555,232 685,282 680,300 640,290 555,245'],
  [SHADE, '690,135 770,95 775,135 735,160'],
  [TAN, '770,80 890,130 888,170 775,130'],
  ['#7768ae', '735,158 775,133 856,165 840,200'],
  ['#5549a2', '745,155 775,140 775,172'],
  [TAN, '650,170 680,180 900,270 890,290 760,240 655,190'],
  ['#dcc155', '680,150 950,262 945,282 905,270 680,180'],
  // rooms on the far side
  [TAN, '890,130 1025,185 1022,225 890,175'],
  [DEEP, '888,172 1005,215 985,262 870,222'],
  [FLOOR, '862,225 905,232 985,262 955,275'],
  [SHADE, '855,165 890,140 888,175 862,222'],
  [TAN, '1025,188 1150,230 1148,268 1022,225'],
  ['#6258bb', '1015,228 1120,262 1095,300 985,262'],
  [FLOOR, '985,262 1050,275 1090,302 1060,305'],
  [SHADE, '970,270 1028,195 1022,232 988,268'],
  [TAN, '1150,230 1260,272 1252,310 1148,268'],
  ['#6c64c4', '1140,272 1252,308 1225,355 1112,318'],
  [FLOOR, '1112,318 1160,320 1225,355 1200,358'],
  [SHADE, '1090,302 1152,235 1148,275 1118,318'],
  [TAN, '1262,262 1470,320 1440,400 1255,330'],
  ['#8f86c8', '1392,335 1432,345 1425,358 1388,347'],
  ['#d59a82', '1262,335 1412,385 1405,418 1250,372'],
  ['#b9604a', '1370,398 1408,400 1400,418 1372,412'],
  [SHADE, '1225,358 1262,300 1258,335 1240,368'],
  [SHADE, '1440,400 1472,320 1400,445 1350,560 1330,560 1400,430'],
  [TAN, '948,280 1240,365 1400,440 1390,455 1170,380 945,300'],
  // middle corridor
  [SHADE, '610,345 750,235 752,280 650,375'],
  [TAN, '755,235 840,268 832,310 790,320 755,280'],
  [PURPLE, '660,350 750,280 755,330 700,378'],
  [PALE, '670,385 755,320 790,365 760,400 700,405'],
  ['#3e3d3c', '762,278 800,248 798,290'],
  [TAN, '762,278 795,292 792,365 755,345'],
  [SHADE, '755,420 900,275 902,310 765,465'],
  [PURPLE, '762,440 880,335 885,385 780,480'],
  [PALE, '845,440 885,370 960,395 1030,450 1060,380 1130,420 1090,480 1010,560 950,625 905,645 862,530'],
  [TAN, '885,310 975,345 1040,375 1025,445 905,395'],
  [PURPLE, '905,395 1025,440 1010,500 910,435'],
  [SHADE, '915,350 975,305 975,335 935,375'],
  ['#444442', '970,390 1030,330 1052,345 1000,400'],
  [TAN, '902,275 1170,355 1150,385 1040,350 900,310'],
  [LILAC, '1055,350 1150,385 1115,430 1055,400'],
  [DEEP, '1095,378 1120,388 1115,412 1092,405'],
  // green slab
  [SHADE, '455,465 590,368 600,412 505,492'],
  [TAN, '595,368 742,415 675,452 600,412'],
  ['#129a12', '505,492 602,415 675,450 642,482 575,535'],
  [TAN, '455,465 580,540 585,602 460,520'],
  [SHADE, '580,540 740,418 740,490 590,602'],
  [PURPLE, '590,602 740,490 740,515 600,618'],
  // right wing
  [SHADE, '1110,430 1170,360 1172,395 1135,450'],
  [TAN, '1168,362 1345,430 1325,475 1168,400'],
  ['#6a62be', '1160,400 1325,460 1312,505 1140,440'],
  [FLOOR, '1140,440 1190,440 1310,490 1295,515'],
  [TAN, '1110,430 1320,515 1300,570 1100,470'],
  [PURPLE, '1085,480 1280,560 1270,572 1080,500'],
  [SHADE, '1000,570 1060,480 1062,520 1020,580'],
  [TAN, '1062,480 1255,560 1240,620 1062,520'],
  ['#655cbc', '1055,520 1240,590 1225,640 1030,580'],
  [FLOOR, '1020,582 1085,578 1225,635 1190,668'],
  [TAN, '985,572 1215,668 1200,720 960,600'],
  [PURPLE, '970,610 1060,645 1040,665 960,635'],
  [SHADE, '1290,600 1345,510 1350,560 1225,690'],
  [TAN_DIM, '1230,640 1300,570 1290,640 1210,740'],
  [TAN, '950,620 1180,725 1160,770 945,660'],
  ['#6a60ba', '930,665 1125,755 1105,800 900,740'],
  [FLOOR, '870,770 935,715 1100,790 1045,885 940,820'],
  [SHADE, '840,770 945,640 945,690 870,775'],
  [SHADE, '1090,820 1220,700 1100,880 1050,900'],
  [TAN, '1090,790 1190,720 1180,760 1100,840'],
  [TAN, '845,765 1050,895 1045,940 830,800'],
  // centre bottom rooms
  [PURPLE, '770,490 860,530 935,540 935,600 900,640 860,590 790,560'],
  [TAN, '770,490 800,505 860,530 855,560 800,545'],
  [LILAC, '800,545 860,560 905,640 800,590'],
  [TAN, '865,525 885,535 905,530 935,545 930,570 865,555'],
  [TAN_DIM, '885,520 910,500 940,515 930,600 905,615'],
  [SHADE, '800,590 860,525 858,560 825,600'],
  [SHADE, '645,690 760,575 765,615 680,715'],
  [TAN, '765,578 915,650 885,710 765,615'],
  ['#5f56bb', '680,715 768,615 885,700 860,735 760,660'],
  [FLOOR, '690,718 765,635 872,712 810,790 740,770'],
  [SHADE, '790,820 915,655 920,690 820,800'],
  [TAN, '645,690 740,755 735,790 640,720'],
  [SHADE, '640,600 705,545 712,590 660,630'],
  [TAN, '705,545 765,575 690,630 640,605'],
  [PURPLE, '712,570 760,580 690,630 680,620'],
  [SHADE, '600,640 700,560 690,590 600,660'],
  [TAN, '370,550 470,520 480,560 390,610'],
  [SHADE, '460,600 530,535 540,590 480,640'],
  [PALE, '475,640 560,595 545,640 500,660'],
  [TAN, '530,535 600,600 560,625 535,590'],
  [SHADE, '540,690 635,615 640,665 590,720'],
  [PURPLE, '590,690 640,660 735,790 700,800'],
  [TAN, '590,690 640,720 650,770 600,740'],
  [PALE, '710,790 760,810 780,850 740,830'],
  // front facade
  ['#3a347c', '345,640 495,735 485,755 345,675'],
  [TAN, '345,585 540,690 790,845 960,965 800,965 640,850 500,748 350,650'],
  [TAN, '285,620 345,595 350,620 320,650 330,720 300,690'],
  ['#4f4b49', '320,650 350,640 355,665 328,680'],
  [SHADE, '790,810 850,780 890,830 885,920 795,860'],
  [TAN, '800,800 890,860 885,920 790,860'],
  [PURPLE, '835,815 870,835 865,860 835,845'],
  [TAN, '840,765 935,790 930,830 1045,890 1042,940 900,850'],
  [LILAC, '885,905 925,840 1040,930 1030,965 960,965'],
  [PALE, '930,880 990,910 985,930 935,905'],
  ['#4b4584', '1005,920 1030,935 1022,965 1000,955'],
  [PALE, '690,880 775,935 850,965 780,965'],
  [SHADE, '690,862 705,870 702,895 690,885'],
  [SHADE, '538,765 555,775 556,798 542,790'],
  // detached piece
  [PALE, '1235,860 1250,838 1440,935 1432,965 1290,920'],
  [TAN, '1215,862 1430,965 1175,965 1190,910'],
  [SHADE, '1190,905 1215,865 1240,880 1225,930'],
  [PURPLE, '1222,925 1300,965 1230,965'],
  [TAN_DIM, '1350,850 1372,855 1345,925 1328,915'],
];

const studs = [
  'M770 72L860 98L1030 165L1290 250L1468 322',
  'M690 135L560 228L440 295L320 372',
  'M890 125L1020 172',
  'M1400 445L1290 640L1130 890',
  'M1345 430L1325 500',
  'M1250 565L1235 630',
  'M370 555L440 540L470 525',
  'M870 170L1150 232',
  'M520 372L595 380L640 350',
];

const edges = [
  'M345 585L540 690L790 845L960 965',
  'M172 472L345 582M320 372L457 465M412 312L560 392',
  'M590 370L742 418L580 540M595 370L455 465L580 540V600',
  'M550 240L645 282M652 170L755 228L610 345M550 240L440 292',
  'M755 420L902 275L1170 358M765 465L902 310M740 480L590 602',
  'M1110 430L1170 362L1345 430M1000 570L1062 480L1255 560M840 770L950 622L1180 725',
  'M645 690L765 578L915 652L790 820M540 690L640 612L705 545L800 500',
  'M638 385V470M1185 400V440M1088 525V575M1010 705V760M450 560L530 640M750 430V400M862 530V600M910 510V615',
  'M985 572L1215 668M950 600L1190 700M1060 640L1040 680M1180 480L1165 520',
  'M1215 862L1430 965M172 475L200 572L290 612',
];

const BuildingView = () => (
  <svg width="100%" height="100%" viewBox="0 0 1078 319" preserveAspectRatio="xMidYMid slice">
    <g transform="translate(-227 -83) scale(.3333)">
      <ellipse cx="937" cy="1022" rx="185" ry="116" fill="none" stroke="#e1e3e8" strokeWidth="38" />
      <g stroke="#6f7176" strokeWidth="4" strokeLinejoin="round">
        <path d="M918 812l134 66-97 89-135-62z" fill="#edeef1" />
        <path d="M820 905l135 62-2 121-133-65z" fill="#e8e9ed" />
        <path d="M955 967l97-89v119l-99 91z" fill="#e6e7eb" />
      </g>
      <path d="M915 845l85 25-55 70-85-45z" fill="#d6d8e0" />
      <path d="M845 905l100 40-15 95-85-35z" fill="#d9dbe3" />
      <path d="M970 965l65-45v70l-65 40z" fill="#d9dbe3" />
      <path d="M865 898l82 38-17 42-85-33v-32z" fill="#86a4d8" />
      <path d="M820 905l135 62" stroke="#55575c" strokeWidth="4" />
      <g fontFamily={chartFont} fontSize="27" fontWeight="700" fill="#26272b" textAnchor="middle">
        <text x="943" y="898" transform="rotate(-48 943 898)">TOP</text>
        <text x="884" y="1007" transform="rotate(18 884 1007)">LEFT</text>
        <text x="1009" y="994" transform="rotate(-43 1009 994)" fontSize="24">FRONT</text>
      </g>
    </g>
    <g transform="translate(263 -3) scale(.3444 .3333)">
      {faces.map(([fill, points], i) => (
        <polygon key={i} points={points} fill={fill} />
      ))}
      <path d="M205 562L285 612" stroke="#e3cc45" strokeWidth="7" />
      <g fill="none" stroke="#6a5a4c" strokeWidth="2" opacity=".65">
        {edges.map((d) => (
          <path key={d} d={d} />
        ))}
      </g>
      <g fill="none" stroke="#8a7660" strokeWidth="8" strokeDasharray="5 19">
        {studs.map((d) => (
          <path key={d} d={d} />
        ))}
      </g>
      <g fill="none" stroke={TAN} strokeWidth="11" strokeDasharray="9 23">
        <path d="M775 66L1030 158L1290 243L1468 315M1345 432L1240 640L1110 830" />
      </g>
      <g fill="#332c7c">
        <path d="M930 193l26 9-4 28-24-8zM1058 243l30 9-4 22-28-8zM1170 290l26 8-4 24-25-8zM1258 445l58 20-4 26-58-20zM705 310l14-6v34l-12 6zM905 425l24 8-20 12zM845 825l22 10-4 20-20-10zM822 680l16 8-4 10-12-8zM1172 720l32 12-4 12-30-12z" />
        <path d="M340 625h8v40zM1284 560l20 8-2 10-20-10zM540 760l14 10v26l-12-6zM935 940l34 12-6 13-10-4-6-12z" />
      </g>
      <path d="M896 185v36M905 188v36M914 192v36M1022 238v34M1034 242v34M1048 246v34M390 660v28M430 680v32" stroke="#c9c6e6" strokeWidth="4" />
      <path d="M738 472l0 42 9-8 8 16 8-3-7-16h13z" fill="#fff" stroke="#333" strokeWidth="2" />
    </g>
  </svg>
);

/* ---- parts ---- */

const RibbonButton = ({ item }) => (
  <LargeButton type="button" $width={item.width} $active={item.active} $disabled={item.disabled}>
    <IconPane $shade={item.shade}>
      <Icon name={item.icon} size={40} box={40} />
    </IconPane>
    {item.lines.map((line, i) => (
      <ButtonLine key={line}>
        {line}
        {item.caret === 'inline' && i === 1 && <Caret color={item.disabled ? '#b5b5b7' : '#4a4a4c'} />}
      </ButtonLine>
    ))}
    {item.caret === 'below' && (
      <ButtonLine>
        <Caret color="#4a4a4c" />
      </ButtonLine>
    )}
  </LargeButton>
);

const Scroll = ({ vertical, before, size, after }) => (
  <ScrollTrack $vertical={vertical}>
    <ScrollButton type="button" aria-label={vertical ? 'Scroll up' : 'Scroll left'}>
      <Chevron turn={vertical ? 0 : -90} />
    </ScrollButton>
    <ScrollSpace $size={before} />
    <ScrollThumb $size={size} />
    <ScrollSpace $size={after} />
    <ScrollButton type="button" aria-label={vertical ? 'Scroll down' : 'Scroll right'}>
      <Chevron turn={vertical ? 180 : 90} />
    </ScrollButton>
  </ScrollTrack>
);

const Controls = () => (
  <PanelControls>
    <PlainButton type="button" aria-label="Menu"><Caret /></PlainButton>
    <PlainButton type="button" aria-label="Pin"><Icon name="pin" size={12} /></PlainButton>
    <PlainButton type="button" aria-label="Close"><Icon name="close" size={12} /></PlainButton>
  </PanelControls>
);

const quick = [['folder', true], ['disk'], ['exportDoc', true], ['blob'], ['printer'], ['gear'], ['undo', true], ['redo']];

const PlayerTools = () => (
  <PlayerStrip>
    <Grip />
    <ToolButton type="button" aria-label="Record"><Icon name="record" size={14} /></ToolButton>
    <ToolDivider />
    {['start', 'back', 'prev', 'stop', 'play', 'next', 'end', 'loop'].map((name) => (
      <ToolButton key={name} type="button" aria-label={name} $active={name === 'play' || name === 'loop'}>
        <Icon name={name} size={name === 'loop' ? 16 : 12} />
      </ToolButton>
    ))}
    <ToolDivider />
    <ToolButton type="button" aria-label="Focused time" $width={24}><Icon name="flag" size={18} box={40} /></ToolButton>
    <ToolButton type="button" aria-label="Play animations"><Icon name="clapper" size={18} box={40} /></ToolButton>
    <ToolDivider />
    <ToolButton type="button" aria-label="Up" $width={22}><Icon name="circleUp" /></ToolButton>
    <ToolButton type="button" aria-label="Down"><Icon name="circleDown" /></ToolButton>
    <ToolDivider />
    <ToolButton type="button" aria-label="Expand" $width={26}><Icon name="boxes" size={16} /></ToolButton>
    <ToolButton type="button" aria-label="Collapse" $width={18}><Icon name="boxesGrey" size={16} /></ToolButton>
    <ToolDivider />
    <ToolButton type="button" aria-label="Step" $width={34}>
      <Icon name="pie" size={16} box={40} />
      <Caret color="#c3c3c5" size={7} />
    </ToolButton>
    <ToolButton type="button" aria-label="Speed" $width={32} $active>
      <Icon name="gauge" size={16} box={40} />
      <Caret size={7} />
    </ToolButton>
    <ToolButton type="button" aria-label="More" $width={14}><Caret size={7} /></ToolButton>
  </PlayerStrip>
);

export default function App() {
  return (
    <Window>
      <GlobalStyle />
      <TitleBar>
        <QuickAccess>
          {quick.map(([name, menu]) => (
            <React.Fragment key={name}>
              <PlainButton type="button" aria-label={name}>
                <Icon name={name} size={menu ? 16 : 18} box={17} />
              </PlainButton>
              {menu && <Caret color="#fff" size={7} />}
            </React.Fragment>
          ))}
          <PlainButton type="button" aria-label="More commands">
            <Icon name="more" size={14} />
          </PlainButton>
        </QuickAccess>
        <span>LPCH GF 02.sp - Synchro</span>
        <WindowButtons>
          {['minimise', 'restore', 'closeWhite'].map((name) => (
            <PlainButton key={name} type="button" aria-label={name}>
              <Icon name={name} size={12} />
            </PlainButton>
          ))}
        </WindowButtons>
      </TitleBar>
      <TabBar>
        <FileTab type="button">File</FileTab>
        {ribbonTabs.map((name) => (
          <RibbonTab key={name} type="button" $active={name === '4D Review'}>
            {name}
          </RibbonTab>
        ))}
        <HelpButton type="button">
          <svg width="9" height="7" viewBox="0 0 9 7">
            <path d="M1 6l3.500-4L8 6" fill="none" stroke="#fff" strokeWidth="2" />
          </svg>
          Help
          <Caret color="#fff" size={7} />
        </HelpButton>
      </TabBar>

      <Ribbon>
        {ribbonGroups.map((group) => (
          <RibbonGroup key={group.label}>
            <GroupBody>
              {group.buttons.map((item) => (
                <RibbonButton key={item.icon} item={item} />
              ))}
              {(group.columns || []).map((column) => (
                <SmallColumn key={column.width} $width={column.width}>
                  {column.items.map((item) => (
                    <SmallButton key={item.icon} type="button" aria-label={item.text || item.icon} $active={item.active} $iconOnly={!item.text}>
                      <Icon name={item.icon} size={item.text || group.label === 'Player' ? 15 : 18} />
                      {item.text}
                    </SmallButton>
                  ))}
                </SmallColumn>
              ))}
            </GroupBody>
            <GroupLabel>{group.label}</GroupLabel>
          </RibbonGroup>
        ))}
      </Ribbon>

      <Toolbar>
        <ToolbarStrip>
          <Grip />
          {combos.map((text) => (
            <Combo key={text}>
              <ComboSelect aria-label={text}>
                <option>{text}</option>
              </ComboSelect>
              <Caret size={7} />
            </Combo>
          ))}
        </ToolbarStrip>
        <PlayerTools />
      </Toolbar>

      <Main>
        <SidePanel $width={221}>
          <PanelHeader $right={7}>
            <PanelTitle>Animations</PanelTitle>
            <Controls />
          </PanelHeader>
          <PanelBody $pad="11px 4px 0 9px" $gap={3}>
            <AnimationList>
              <SearchRow>
                <SearchInput placeholder="<all>" aria-label="Search animations" />
                <Icon name="search" size={17} />
              </SearchRow>
              <AnimationRow>
                <RowArrow />
                <RowName>New Animation</RowName>
              </AnimationRow>
              <AnimationRow $selected>
                <RowArrow><Icon name="closedSolid" size={11} /></RowArrow>
                <RowName $selected>New Animation</RowName>
              </AnimationRow>
            </AnimationList>
            <Sections>
              {['General', 'AVI Export', 'Timeline'].map((name) => (
                <Section key={name} type="button">
                  <Icon name="closed" size={10} />
                  {name}
                </Section>
              ))}
            </Sections>
          </PanelBody>
          <DockTabs>
            <DockTab type="button">Resour...</DockTab>
            <DockTab type="button">3D Obj...</DockTab>
            <DockTab type="button">Project</DockTab>
            <DockTab type="button" $active>Animat...</DockTab>
          </DockTabs>
        </SidePanel>
        <Splitter />

        <Centre>
          <ScheduleRow>
            <TaskPane>
              <TableClip>
                <TaskTable>
                  <colgroup>
                    <col width="39" />
                    <col width="305" />
                    <col width="61" />
                    <col />
                  </colgroup>
                  <thead>
                    <tr>
                      <th aria-label="Number" />
                      <NameHead>Name</NameHead>
                      <DurationHead>Dur<br />ati...</DurationHead>
                      <StartHead>Start</StartHead>
                    </tr>
                  </thead>
                  <tbody>
                    {tasks.map(([id, name, duration, start, done]) => (
                      <tr key={id}>
                        <td>{id}</td>
                        <td>{name}</td>
                        <FadedCell $done={done}>{duration}</FadedCell>
                        <FadedCell $done={done}>{start}</FadedCell>
                      </tr>
                    ))}
                  </tbody>
                </TaskTable>
              </TableClip>
              <Scroll vertical before={213} size={19} after={13} />
              <Scroll before={1} size={305} after={126} />
            </TaskPane>
            <GanttPane>
              <GanttChart />
              <GanttScroll>
                <Scroll before={442} size={100} after={2} />
              </GanttScroll>
              <ResourceFrame>
                <ResourceChart />
              </ResourceFrame>
            </GanttPane>
          </ScheduleRow>
          <DockTabs>
            <DockTab type="button" $pad={6}>Support</DockTab>
            <DockTab type="button" $pad={6} $active>Gantt</DockTab>
          </DockTabs>
          <HorizontalBar />
          <PanelHeader $right={7}>
            <PanelTitle $accent>3D Using Dates [Best] Filters[Increment 7] [1201x356]</PanelTitle>
            <Controls />
          </PanelHeader>
          <Viewport>
            <BuildingView />
          </Viewport>
        </Centre>
        <Splitter />

        <SidePanel $width={412}>
          <PanelHeader $right={4}>
            <PanelTitle>Task Properties</PanelTitle>
            <Controls />
          </PanelHeader>
          <PropertyTabs>
            {propertyIcons.map((name, i) => (
              <PropertyTab key={name} type="button" aria-label={name} $active={i === 0}>
                <Icon name={name} />
              </PropertyTab>
            ))}
            <PropertyTab type="button" aria-label="Previous tabs" $width={10}><Icon name="leftHollow" size={12} /></PropertyTab>
            <PropertyTab type="button" aria-label="Next tabs" $width={15}><Icon name="rightSolid" size={12} /></PropertyTab>
          </PropertyTabs>
          <PanelBody $pad="5px 5px 0 7px">
            <PropertyFrame>
              <PropertyTable>
                <colgroup>
                  <col width="20" />
                  <col width="177" />
                  <col />
                </colgroup>
                <tbody>
                  {properties.map(([section, ...names]) => (
                    <React.Fragment key={section}>
                      <tr>
                        <Gutter><Icon name="opened" size={10} /></Gutter>
                        <SectionHead colSpan="2">{section}</SectionHead>
                      </tr>
                      {names.map((name) => (
                        <tr key={name}>
                          <Gutter />
                          <td>{name}</td>
                          <td>{name === '% Complete' ? '0.00' : ''}</td>
                        </tr>
                      ))}
                    </React.Fragment>
                  ))}
                </tbody>
              </PropertyTable>
              <Scroll vertical before={2} size={321} after={228} />
            </PropertyFrame>
          </PanelBody>
          <DockTabs>
            <DockTab type="button" $pad={5} $active>Task Properties</DockTab>
            <DockTab type="button">Resource Propert...</DockTab>
            <DockTab type="button">3D View Properti...</DockTab>
            <DockTab type="button">3D Properties</DockTab>
          </DockTabs>
        </SidePanel>
      </Main>

      <StatusBar>
        <StatusText>For Help, press F1</StatusText>
        <StatusText>Never expire</StatusText>
        <StatusText>Enough memory</StatusText>
        <StatusText $alert>[Filter On] &nbsp;Selected[1][0][0]</StatusText>
        <StatusText>11/21/2017</StatusText>
        <StatusText>updating...</StatusText>
        <StatusText>Transactions: 167</StatusText>
      </StatusBar>
    </Window>
  );
}
